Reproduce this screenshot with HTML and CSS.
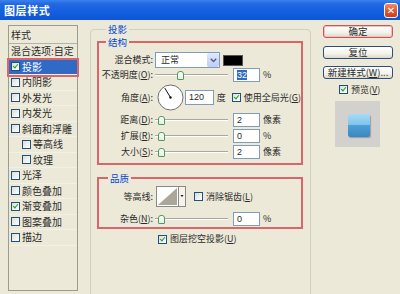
FILE: index.html
```html
<!DOCTYPE html>
<html lang="zh-CN">
<head>
    <meta charset="UTF-8">
    <title>图层样式</title>
    <link rel="stylesheet" href="styles.css">
</head>
<body>
<div class="titlebar">
    <span class="title">图层样式</span>
    <span class="close">✕</span>
</div>
<div class="dialog">
    <div class="style-list">
        <div class="list-head">样式</div>
        <div class="item plain">混合选项:自定</div>
        <div class="item selected"><span class="cb checked"></span>投影</div>
        <div class="item"><span class="cb"></span>内阴影</div>
        <div class="item"><span class="cb"></span>外发光</div>
        <div class="item"><span class="cb"></span>内发光</div>
        <div class="item"><span class="cb"></span>斜面和浮雕</div>
        <div class="item sub"><span class="cb"></span>等高线</div>
        <div class="item sub"><span class="cb"></span>纹理</div>
        <div class="item"><span class="cb"></span>光泽</div>
        <div class="item"><span class="cb"></span>颜色叠加</div>
        <div class="item"><span class="cb checked"></span>渐变叠加</div>
        <div class="item"><span class="cb"></span>图案叠加</div>
        <div class="item"><span class="cb"></span>描边</div>
    </div>

    <fieldset class="group main">
        <legend>投影</legend>

        <fieldset class="group marked structure">
            <legend>结构</legend>
            <div class="row blend-row">
                <span class="lbl">混合模式:</span>
                <div class="select">
                    <span>正常</span>
                    <span class="arrow">
                        <svg width="7" height="5" viewBox="0 0 7 5"><path d="M0.8 0.8 L3.5 3.6 L6.2 0.8" fill="none" stroke="#4d6185" stroke-width="1.4"/></svg>
                    </span>
                </div>
                <span class="swatch"></span>
            </div>
            <div class="row">
                <span class="lbl">不透明度(<u>O</u>):</span>
                <div class="slider"><span class="thumb" style="margin-left: 22px"></span></div>
                <span class="num"><span class="sel">32</span></span>
                <span class="unit">%</span>
            </div>
            <div class="row angle-row">
                <span class="lbl">角度(<u>A</u>):</span>
                <svg class="dial" width="27" height="27" viewBox="0 0 27 27">
                    <circle cx="13.5" cy="13.5" r="12.5" fill="#fff" stroke="#6f6f6a" stroke-width="1"/>
                    <line x1="13.5" y1="13.5" x2="7.8" y2="4.1" stroke="#111" stroke-width="1"/>
                    <circle cx="13.5" cy="13.5" r="1.2" fill="#111"/>
                </svg>
                <span class="num wide">120</span>
                <span class="unit">度</span>
                <span class="cb checked gap-cb"></span>
                <span class="cb-text">使用全局光(<u>G</u>)</span>
            </div>
            <div class="row slider-row">
                <span class="lbl">距离(<u>D</u>):</span>
                <div class="slider"><span class="thumb" style="margin-left: 3px"></span></div>
                <span class="num">2</span>
                <span class="unit">像素</span>
            </div>
            <div class="row slider-row">
                <span class="lbl">扩展(<u>R</u>):</span>
                <div class="slider"><span class="thumb" style="margin-left: 3px"></span></div>
                <span class="num">0</span>
                <span class="unit">%</span>
            </div>
            <div class="row slider-row">
                <span class="lbl">大小(<u>S</u>):</span>
                <div class="slider"><span class="thumb" style="margin-left: 3px"></span></div>
                <span class="num">2</span>
                <span class="unit">像素</span>
            </div>
        </fieldset>

        <fieldset class="group marked quality">
            <legend>品质</legend>
            <div class="row contour-row">
                <span class="lbl">等高线:</span>
                <svg class="contour" width="30" height="21" viewBox="0 0 30 21">
                    <rect x="0.5" y="0.5" width="29" height="20" fill="#fff" stroke="#8a8a84"/>
                    <path d="M2 19 L21 2 L21 19 Z" fill="#aaa69a"/>
                    <rect x="22.5" y="0.5" width="7" height="20" fill="#f4f3ee" stroke="#8a8a84"/>
                    <path d="M24.5 9 L27.5 9 L26 11 Z" fill="#111"/>
                </svg>
                <span class="cb aa-cb"></span>
                <span class="cb-text">消除锯齿(<u>L</u>)</span>
            </div>
            <div class="row noise-row">
                <span class="lbl">杂色(<u>N</u>):</span>
                <div class="slider"><span class="thumb" style="margin-left: 3px"></span></div>
                <span class="num">0</span>
                <span class="unit">%</span>
            </div>
        </fieldset>

        <div class="knockout">
            <span class="cb checked"></span>
            <span class="cb-text">图层挖空投影(<u>U</u>)</span>
        </div>
    </fieldset>

    <div class="side">
        <div class="btn default">确定</div>
        <div class="btn">复位</div>
        <div class="btn">新建样式(<u>W</u>)...</div>
        <div class="preview-check">
            <span class="cb checked"></span>
            <span class="cb-text">预览(<u>V</u>)</span>
        </div>
        <div class="preview">
            <div class="preview-box"></div>
        </div>
    </div>
</div>
</body>
</html>
```

FILE: styles.css
```css
* {
    box-sizing: border-box;
}
html, body {
    margin: 0;
    padding: 0;
}
body {
    width: 400px;
    height: 294px;
    overflow: hidden;
    background: #ece9d8;
    color: #2b2b2b;
    font-family: "Noto Sans CJK SC", "Liberation Sans", sans-serif;
    font-size: 9px;
    line-height: 12px;
}
u {
    text-decoration: underline;
    text-underline-offset: 1px;
}

/* title bar */
.titlebar {
    height: 20px;
    display: flex;
    align-items: center;
    justify-content: space-between;
    padding: 0 2px 0 4px;
    background: linear-gradient(#3a82ee, #2268e0 20%, #135fe0 60%, #0d55d4);
    color: #fff;
}
.title {
    font-size: 11px;
    font-weight: bold;
    letter-spacing: 0.6px;
}
.close {
    width: 14px;
    height: 15px;
    border: 1px solid #fff;
    border-radius: 3px;
    background: linear-gradient(#f08a64, #e0522c 60%, #c8401c);
    color: #fff;
    font-size: 10px;
    font-weight: bold;
    line-height: 13px;
    text-align: center;
    font-family: "DejaVu Sans", sans-serif;
}

.dialog {
    display: flex;
    align-items: flex-start;
    padding: 5px 0 0 8px;
}

/* left list of styles */
.style-list {
    width: 70px;
    height: 266px;
    border: 1px solid #9c9b8f;
    background: #ece9d8;
}
.list-head {
    height: 18px;
    padding-left: 2px;
    line-height: 17px;
    border-bottom: 1px solid #b5b3a5;
    font-size: 10px;
}
.item {
    height: 15.5px;
    display: flex;
    align-items: center;
    padding-left: 2px;
    border-bottom: 1px solid #f3f1e6;
    font-size: 10px;
    white-space: nowrap;
}
.item.sub {
    padding-left: 13px;
}
.item .cb {
    margin-right: 2px;
}
.item.selected {
    background: #316ac5;
    color: #fff;
    outline: 2px solid #d9676a;
    outline-offset: 0;
}

/* checkbox */
.cb {
    position: relative;
    display: inline-block;
    flex: none;
    width: 9px;
    height: 9px;
    border: 1px solid #1c5180;
    background: linear-gradient(135deg, #dcdcd6, #fff);
}
.cb.checked::after {
    content: "";
    position: absolute;
    left: 2px;
    top: 0;
    width: 2px;
    height: 4px;
    border: solid #21a121;
    border-width: 0 1.5px 1.5px 0;
    transform: rotate(40deg);
}
.cb-text {
    margin-left: 3px;
    white-space: nowrap;
}

/* group boxes */
.group {
    margin: 0;
    padding: 0;
    min-width: 0;
    border: 1px solid #d0d0bf;
    border-radius: 4px;
}
.group legend {
    padding: 0 2px;
    color: #0046d5;
    line-height: 12px;
    font-size: 9.5px;
}
.main {
    width: 221px;
    height: 280px;
    margin-left: 12px;
    margin-top: -2px;
    padding: 0 7px 0 6px;
}
.main > legend {
    margin-left: 9px;
}
.marked {
    border: 2px solid #d9676a;
    border-radius: 0;
    padding: 0;
}
.marked legend {
    margin-left: 7px;
}
.structure {
    margin-top: 1px;
    padding-bottom: 4px;
}
.quality {
    margin-top: 7px;
    padding-bottom: 1px;
}
.quality legend {
    margin-left: 9px;
}

/* rows */
.row {
    display: flex;
    align-items: center;
    height: 14px;
    white-space: nowrap;
}
.lbl {
    width: 55px;
    flex: none;
    text-align: right;
    padding-right: 1px;
}
.blend-row {
    height: 16px;
    margin-top: 4px;
}
.angle-row {
    height: 27px;
    margin-top: 2px;
}
.slider-row {
    margin-top: 2px;
}
.contour-row {
    height: 21px;
    margin-top: 2px;
}
.noise-row {
    margin-top: 5px;
}

.select {
    display: flex;
    align-items: center;
    justify-content: space-between;
    width: 65px;
    height: 16px;
    margin-left: 1px;
    padding-left: 5px;
    border: 1px solid #7f9db9;
    background: #fff;
}
.select .arrow {
    display: flex;
    align-items: center;
    justify-content: center;
    width: 12px;
    height: 14px;
    border-radius: 2px;
    background: linear-gradient(#dfe8fd, #bccdf7);
}
.swatch {
    width: 20px;
    height: 11px;
    margin-left: 3px;
    background: #000;
    border: 1px solid #555;
}

.slider {
    display: flex;
    align-items: center;
    width: 73px;
    height: 14px;
    margin-left: 1px;
    background: linear-gradient(transparent 6px, #a9a89c 6px, #a9a89c 7px, #fff 7px, #fff 8px, transparent 8px);
}
.thumb {
    width: 7px;
    height: 9px;
    border: 1px solid #4f9a5c;
    border-radius: 3px 3px 1px 1px;
    background: linear-gradient(#fff, #e4efe4);
}

.num {
    width: 27px;
    height: 14px;
    margin-left: 5px;
    padding-left: 3px;
    border: 1px solid #7f9db9;
    background: #fff;
    font-family: "Liberation Sans", sans-serif;
    font-size: 9px;
    line-height: 12px;
}
.num .sel {
    background: #316ac5;
    color: #fff;
}
.num.wide {
    width: 29px;
    height: 15px;
    margin-left: 1px;
}
.unit {
    margin-left: 3px;
    font-size: 9px;
}
.dial {
    margin-left: 3px;
    flex: none;
}
.gap-cb {
    margin-left: 6px;
}

.contour {
    margin-left: 2px;
    flex: none;
}
.aa-cb {
    margin-left: 8px;
}

.knockout {
    display: flex;
    align-items: center;
    height: 10px;
    margin-top: 5px;
    margin-left: 61px;
}

/* right column */
.side {
    width: 70px;
    margin-left: 12px;
}
.btn {
    height: 13px;
    margin-bottom: 7.5px;
    border: 1px solid #2d4f7c;
    border-radius: 3px;
    background: linear-gradient(#fff, #f3f2ea 60%, #dcd8cb);
    text-align: center;
    font-size: 9.5px;
    line-height: 11px;
    white-space: nowrap;
}
.btn.default {
    border-color: #c9575a;
    box-shadow: inset 0 0 0 1px #eec0c0;
}
.preview-check {
    display: flex;
    align-items: center;
    margin-top: -2px;
    margin-left: 16px;
    height: 10px;
}
.preview {
    display: flex;
    align-items: center;
    justify-content: center;
    width: 45px;
    height: 46px;
    margin-top: 6px;
    margin-left: 12px;
    padding-top: 3px;
    padding-left: 2px;
    background: #d2d1ce;
}
.preview-box {
    width: 22px;
    height: 23px;
    border-radius: 2px;
    background: linear-gradient(#a9dbf6, #7ec3ec 48%, #4d9fd5 50%, #3a88c0);
    box-shadow: 1px 1px 1px rgba(0, 0, 0, 0.25);
}
```
